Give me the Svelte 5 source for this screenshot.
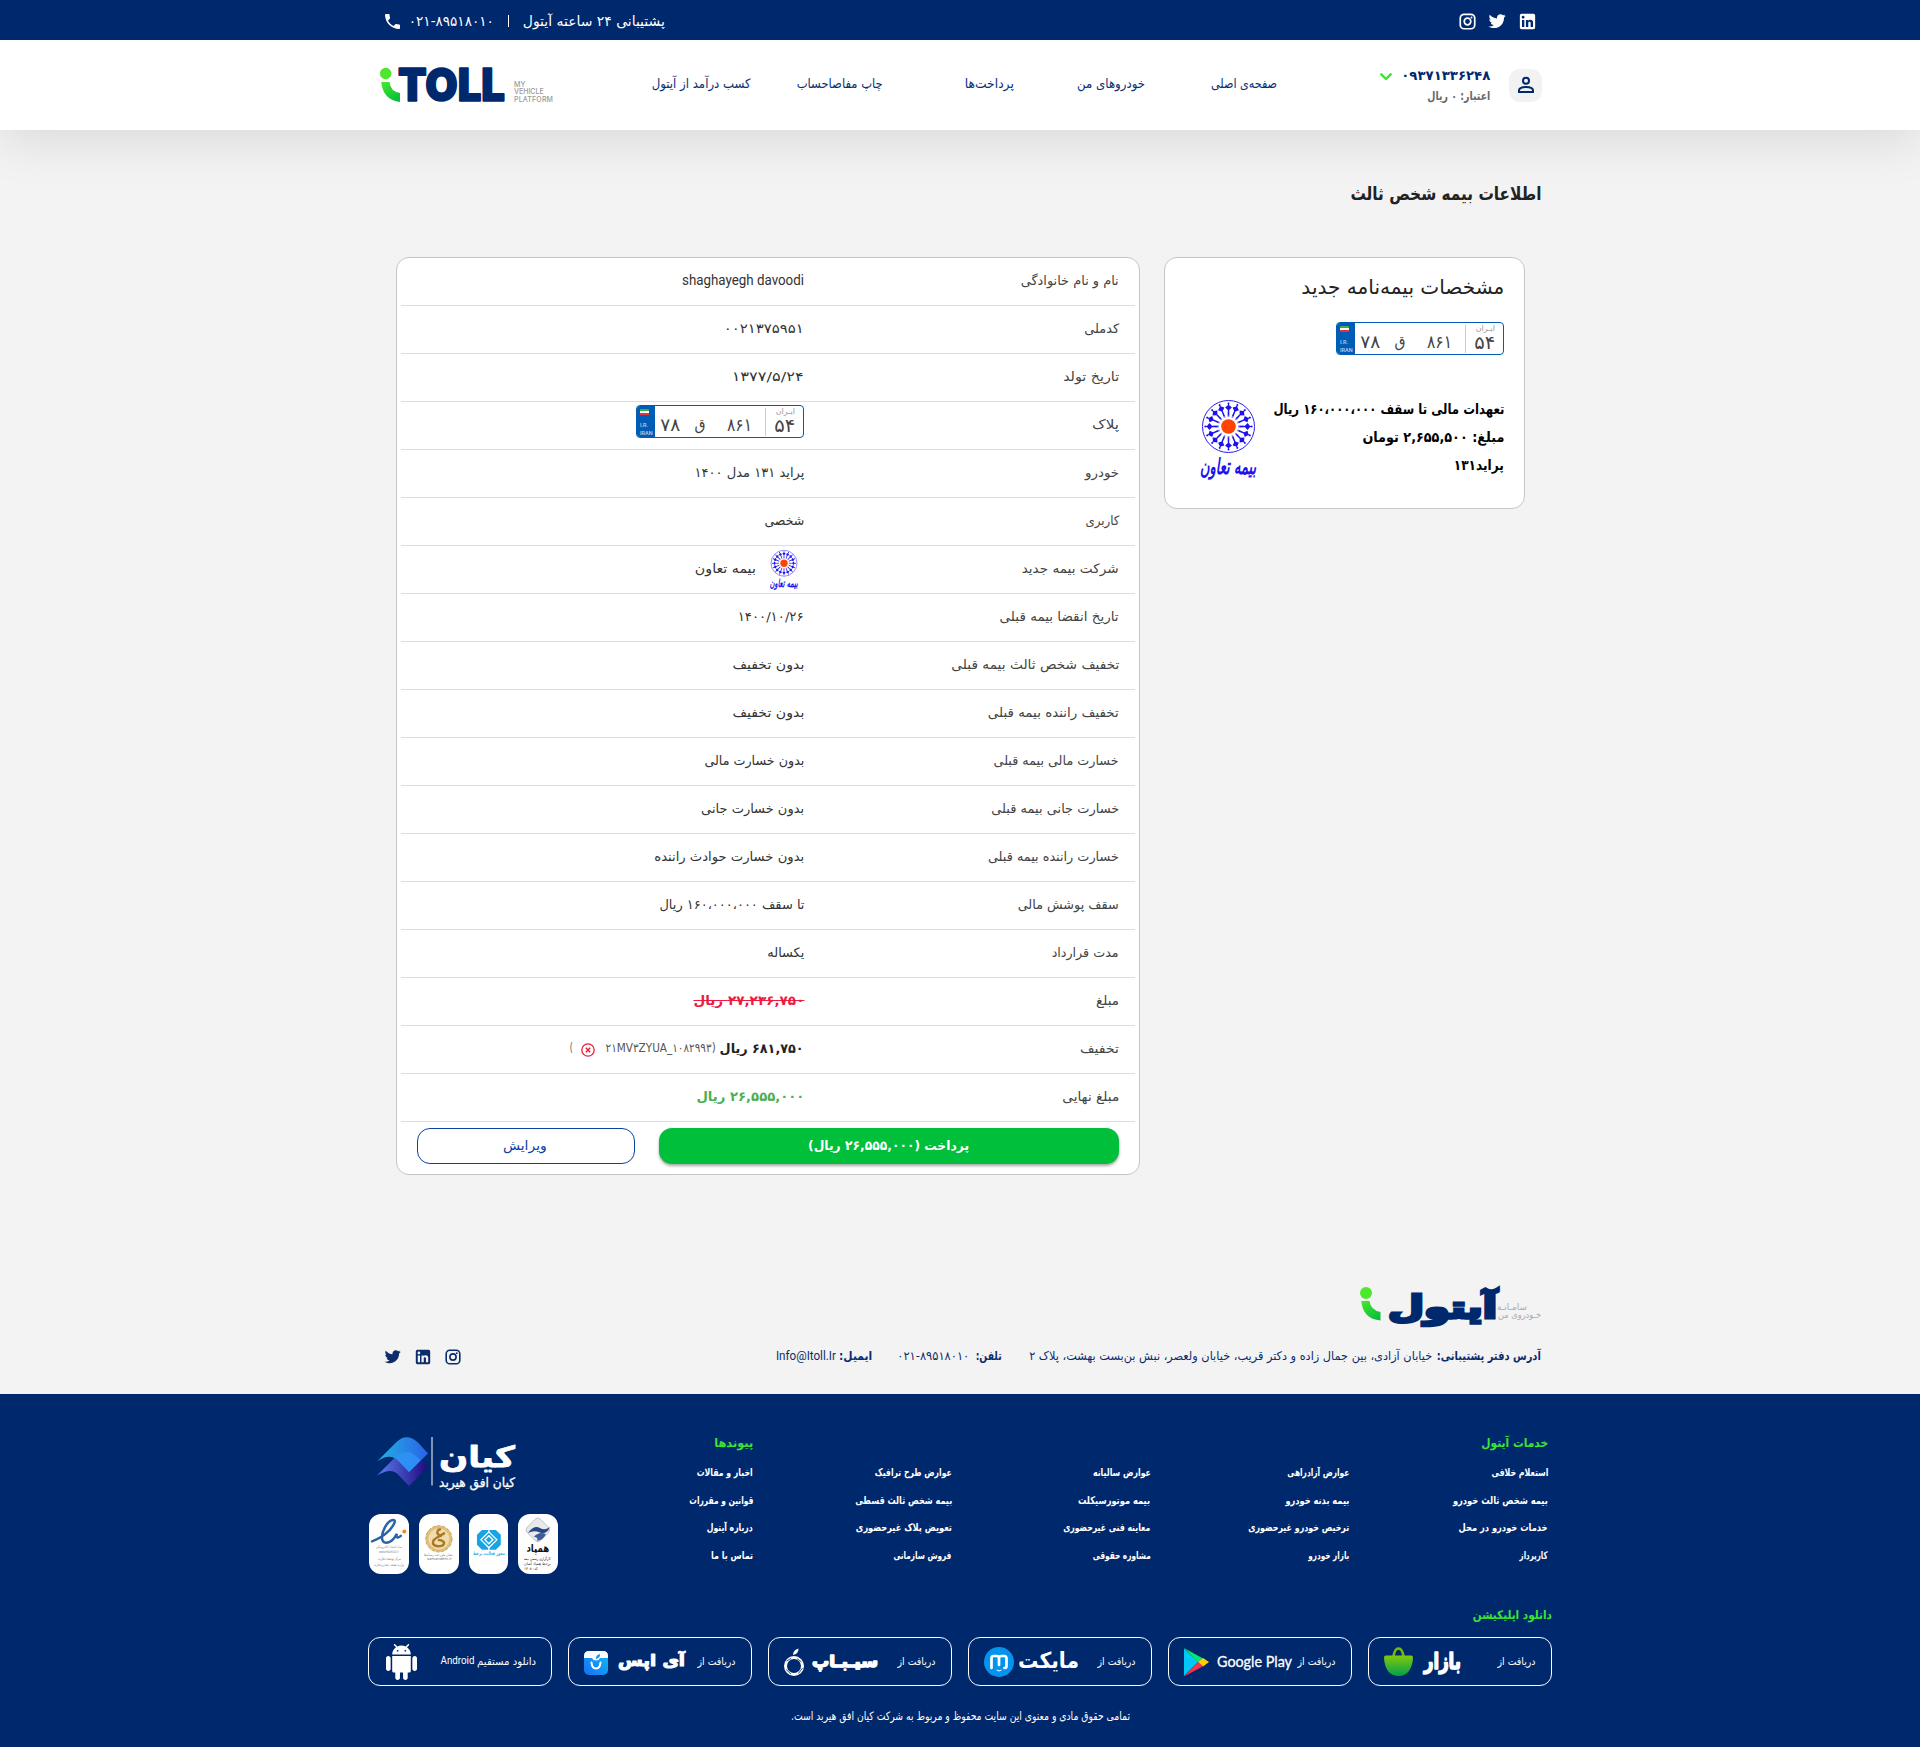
<script>
  const nav = [
    ['صفحه‌ی اصلی', 66],
    ['خودروهای من', 68],
    ['پرداخت‌ها', 49],
    ['چاپ مفاصاحساب', 86],
    ['کسب درآمد از آیتول', 99],
  ];

  const rows = [
    { label: 'نام و نام خانوادگی', lw: 98, value: 'shaghayegh davoodi', vw: 122, cls: 'latin' },
    { label: 'کدملی', lw: 35, value: '۰۰۲۱۳۷۵۹۵۱', vw: 80 },
    { label: 'تاریخ تولد', lw: 56, value: '۱۳۷۷/۵/۲۴', vw: 72 },
    { label: 'پلاک', lw: 27, kind: 'plate' },
    { label: 'خودرو', lw: 34, value: 'پراید ۱۳۱ مدل ۱۴۰۰', vw: 110 },
    { label: 'کاربری', lw: 34, value: 'شخصی', vw: 40 },
    { label: 'شرکت بیمه جدید', lw: 97, kind: 'company', value: 'بیمه تعاون', vw: 61 },
    { label: 'تاریخ انقضا بیمه قبلی', lw: 119, value: '۱۴۰۰/۱۰/۲۶', vw: 66 },
    { label: 'تخفیف شخص ثالث بیمه قبلی', lw: 168, value: 'بدون تخفیف', vw: 72 },
    { label: 'تخفیف راننده بیمه قبلی', lw: 131, value: 'بدون تخفیف', vw: 72 },
    { label: 'خسارت مالی بیمه قبلی', lw: 125, value: 'بدون خسارت مالی', vw: 100 },
    { label: 'خسارت جانی بیمه قبلی', lw: 128, value: 'بدون خسارت جانی', vw: 103 },
    { label: 'خسارت راننده بیمه قبلی', lw: 131, value: 'بدون خسارت حوادث راننده', vw: 150 },
    { label: 'سقف پوشش مالی', lw: 101, value: 'تا سقف ۱۶۰،۰۰۰،۰۰۰ ریال', vw: 145 },
    { label: 'مدت قرارداد', lw: 67, value: 'یکساله', vw: 37 },
    { label: 'مبلغ', lw: 23, value: '۲۷,۲۳۶,۷۵۰ ریال', vw: 111, cls: 'old' },
    { label: 'تخفیف', lw: 39, kind: 'discount', value: '۶۸۱,۷۵۰ ریال', vw: 84 },
    { label: 'مبلغ نهایی', lw: 57, value: '۲۶,۵۵۵,۰۰۰ ریال', vw: 108, cls: 'final' },
  ];

  const columns = [
    { title: 'خدمات آیتول', tw: 67, links: [['استعلام خلافی', 57], ['بیمه شخص ثالث خودرو', 95], ['خدمات خودرو در محل', 89], ['کارپرداز', 28]] },
    { links: [['عوارض آزادراهی', 62], ['بیمه بدنه خودرو', 64], ['ترخیص خودرو غیرحضوری', 101], ['بازار خودرو', 41]] },
    { links: [['عوارض سالیانه', 58], ['بیمه موتورسیکلت', 72], ['معاینه فنی غیرحضوری', 87], ['مشاوره حقوقی', 58]] },
    { links: [['عوارض طرح ترافیک', 77], ['بیمه شخص ثالث قسطی', 97], ['تعویض پلاک غیرحضوری', 96], ['فروش سازمانی', 58]] },
    { title: 'پیوندها', tw: 39, links: [['اخبار و مقالات', 56], ['قوانین و مقررات', 64], ['درباره آیتول', 46], ['تماس با ما', 42]] },
  ];

  const stores = ['bazaar', 'google', 'myket', 'sibapp', 'iapps', 'android'];
  const rays = Array.from({ length: 16 }, (_, i) => i * 22.5);

  // Condenses a line of text horizontally to the width of its box.
  function squeeze(el) {
    const natural = el.getBoundingClientRect().width;
    const wanted = el.parentElement.getBoundingClientRect().width;
    if (natural) el.style.transform = `scaleX(${wanted / natural})`;
  }
</script>

{#snippet t(text, width, cls = '')}
  <span class="fit {cls}" style="width:{width}px"><span class="run" use:squeeze>{text}</span></span>
{/snippet}

{#snippet linkedin()}
  <svg class="social" viewBox="2 2 20 20"><path fill="currentColor" d="M19 3a2 2 0 0 1 2 2v14a2 2 0 0 1-2 2H5a2 2 0 0 1-2-2V5a2 2 0 0 1 2-2h14m-.5 15.5v-5.3a3.26 3.26 0 0 0-3.26-3.26c-.85 0-1.84.52-2.32 1.3v-1.11h-2.79v8.37h2.79v-4.93c0-.77.62-1.4 1.39-1.4a1.4 1.4 0 0 1 1.4 1.4v4.93h2.79M6.88 8.56a1.68 1.68 0 0 0 1.68-1.68c0-.93-.75-1.69-1.68-1.69a1.69 1.69 0 0 0-1.69 1.69c0 .93.76 1.68 1.69 1.68m1.39 9.94v-8.37H5.5v8.37h2.77z" /></svg>
{/snippet}
{#snippet twitter()}
  <svg class="social" viewBox="2 2.5 20.8 20.8"><path fill="currentColor" d="M22.46 6c-.77.35-1.6.58-2.46.69.88-.53 1.56-1.37 1.88-2.38-.83.5-1.75.85-2.72 1.05C18.37 4.5 17.26 4 16 4c-2.35 0-4.27 1.92-4.27 4.29 0 .34.04.67.11.98C8.28 9.09 5.11 7.38 3 4.79c-.37.63-.58 1.37-.58 2.15 0 1.49.75 2.81 1.91 3.56-.71 0-1.37-.2-1.95-.5v.03c0 2.08 1.48 3.82 3.44 4.21a4.22 4.22 0 0 1-1.93.07 4.28 4.28 0 0 0 4 2.98 8.521 8.521 0 0 1-5.33 1.84c-.34 0-.68-.02-1.02-.06C3.44 20.29 5.7 21 8.12 21 16 21 20.33 14.46 20.33 8.79c0-.19 0-.37-.01-.56.84-.6 1.56-1.36 2.14-2.23z" /></svg>
{/snippet}
{#snippet instagram()}
  <svg class="social" viewBox="0 0 16 16" fill="none" stroke="currentColor" stroke-width="1.6">
    <rect x="1.2" y="1.2" width="13.6" height="13.6" rx="3.6" /><circle cx="8" cy="8" r="3.1" /><circle cx="11.8" cy="4.2" r="0.9" fill="currentColor" stroke="none" />
  </svg>
{/snippet}

{#snippet plate()}
  <div class="plate">
    <div class="region"><small>ایـران</small>{@render t('۵۴', 21)}</div>
    <div class="serial">{@render t('۸۶۱', 25)}</div>
    <div class="letter">{@render t('ق', 11)}</div>
    <div class="pair">{@render t('۷۸', 20)}</div>
    <div class="country"><i class="flag"></i><b>I.R.</b><b>IRAN</b></div>
  </div>
{/snippet}

{#snippet insurer(cls)}
  <svg class={cls} viewBox="0 0 57 80">
    <circle cx="29.5" cy="26.5" r="26" fill="#fff" stroke="#2a1ef0" stroke-width="1" />
    {#each rays as angle}
      <g transform="rotate({angle} 29.5 26.5)" fill="#1d12ee">
        <path d="M28.6 17L28.8 10L26.1 7.4L28.8 5.2L29.5 2.6L30.2 5.2L32.9 7.4L30.2 10L30.4 17Z" />
        <circle cx="29.5" cy="3.4" r="1" />
      </g>
    {/each}
    <circle cx="29.5" cy="26.5" r="11" fill="#fff" opacity=".5" />
    <circle cx="29.5" cy="26.5" r="7.3" fill="#ff4305" />
    <text class="callig" x="57" y="74" textLength="56" lengthAdjust="spacingAndGlyphs">بیمه تعاون</text>
  </svg>
{/snippet}

{#snippet storeLogo(name)}
  {#if name === 'bazaar'}
    <svg width="77" height="36" viewBox="0 0 77 36">
      <defs><linearGradient id="bag" x1="0" y1="0" x2="0" y2="1"><stop offset="0" stop-color="#83c80d" /><stop offset="1" stop-color="#00a04c" /></linearGradient></defs>
      <path d="M9.5 13Q10.5 4.5 14.5 4.5T19.500 13" fill="none" stroke="#78b80d" stroke-width="2.6" />
      <path d="M1.800 11.500H27.200Q29.200 11.500 29 14C28.200 25 23.500 32 14.500 32S.800 25 0 14Q-.2 11.500 1.800 11.500Z" fill="url(#bag)" />
      <text class="mark" x="77" y="25" font-size="22" stroke-width="1.600" textLength="37" lengthAdjust="spacingAndGlyphs">بازار</text>
    </svg>
  {:else if name === 'google'}
    <svg width="109" height="36" viewBox="0 0 109 36">
      <path d="M0 4.500L14 18L0 32Z" fill="#00c8f8" /><path d="M0 4L19 14.500L14 18.500Z" fill="#00e776" />
      <path d="M19 14L25 18L19 22.500L14 18.200Z" fill="#ffce00" /><path d="M0 32.500L19 22.200L14 18Z" fill="#f93448" />
      <text class="google" x="33" y="23" font-size="16" textLength="75" lengthAdjust="spacingAndGlyphs">Google Play</text>
    </svg>
  {:else if name === 'myket'}
    <svg width="95" height="36" viewBox="0 0 95 36">
      <circle cx="15" cy="18" r="15" fill="#0494ee" />
      <path d="M7.500 24V14.500Q7.500 12 9.500 12H12.500Q15 12 15 14.500V21M15 14.500Q15 12 17.500 12H20Q22.500 12 22.500 14.500V22Q22.500 24 20.500 24" fill="none" stroke="#fff" stroke-width="2.700" stroke-linecap="round" />
      <path d="M12.500 26Q15 28 17.500 26" fill="none" stroke="#fff" />
      <text class="mark" x="95" y="24" font-size="22" stroke-width="0" textLength="61" lengthAdjust="spacingAndGlyphs">مایکت</text>
    </svg>
  {:else if name === 'sibapp'}
    <svg width="94" height="36" viewBox="0 0 94 36">
      <circle cx="10" cy="22" r="8.500" fill="none" stroke="#fff" stroke-width="3" />
      <path d="M2.500 17L7 14.500M13 14.500L17.500 18M18.500 24L14.500 29.500M7 30L2 25.500" stroke="#00286c" stroke-width=".8" />
      <path d="M9 11Q9 6 14.500 4.500Q14.500 10 9 11Z" fill="#fff" />
      <text class="mark" x="94" y="23" font-size="16" stroke-width="1.500" textLength="66" lengthAdjust="spacingAndGlyphs">سیـبـاپ</text>
    </svg>
  {:else if name === 'iapps'}
    <svg width="101" height="36" viewBox="0 0 101 36">
      <defs><linearGradient id="sky" x1="0" y1="1" x2="1" y2="0"><stop offset="0" stop-color="#176ff4" /><stop offset="1" stop-color="#11bdf4" /></linearGradient></defs>
      <rect y="7" width="24" height="24" rx="5" fill="url(#sky)" />
      <path d="M0 14V12Q0 7 5 7H19Q24 7 24 12V14H16Q15 16.500 12 16.500T8 14Z" fill="#fff" />
      <path d="M12 15Q11.500 11 16 10Q16.500 14 12 15Z" fill="#1598ee" />
      <path d="M7.500 18.500Q8 24.500 12 24.500T16.500 18.500" fill="none" stroke="#fff" stroke-width="2" stroke-linecap="round" />
      <text class="mark" x="101" y="22" font-size="16" stroke-width="1.100" textLength="67" lengthAdjust="spacingAndGlyphs">آی اپس</text>
    </svg>
  {:else}
    <svg class="droid" width="31" height="36" viewBox="2 0 20 24" preserveAspectRatio="none"><path fill="#fff" d="M6 18c0 .55.45 1 1 1h1v3.500c0 .83.67 1.500 1.500 1.500s1.500-.67 1.500-1.500V19h2v3.500c0 .83.67 1.500 1.500 1.500s1.500-.67 1.500-1.500V19h1c.55 0 1-.45 1-1V8H6v10zM3.500 8C2.670 8 2 8.670 2 9.500v7c0 .83.67 1.500 1.500 1.500S5 17.330 5 16.500v-7C5 8.670 4.330 8 3.500 8zm17 0c-.83 0-1.500.67-1.500 1.500v7c0 .83.67 1.500 1.500 1.500s1.500-.67 1.500-1.500v-7c0-.83-.67-1.500-1.500-1.500zm-4.970-5.840l1.300-1.300c.2-.2.2-.51 0-.71-.2-.2-.51-.2-.71 0l-1.480 1.480C13.850 1.230 12.950 1 12 1c-.96 0-1.860.23-2.660.63L7.850.15c-.2-.2-.51-.2-.71 0-.2.2-.2.51 0 .71l1.310 1.310C6.970 3.260 6 5.010 6 7h12c0-1.990-.97-3.750-2.470-4.840zM10 5H9V4h1v1zm5 0h-1V4h1v1z" /></svg>
  {/if}
{/snippet}

<div class="page" dir="rtl">
  <div class="topbar">
    <div class="wrap">
      <div class="icons">{@render linkedin()}{@render twitter()}{@render instagram()}</div>
      <div class="support">
        {@render t('پشتیبانی ۲۴ ساعته آیتول', 142)}
        <i class="bar"></i>
        {@render t('۰۲۱-۸۹۵۱۸۰۱۰', 85)}
        <svg class="phone" viewBox="3 3 18 18"><path fill="currentColor" d="M6.620 10.790c1.440 2.830 3.760 5.140 6.590 6.590l2.200-2.200c.27-.27.67-.36 1.020-.24 1.120.37 2.330.57 3.570.57.55 0 1 .45 1 1V20c0 .55-.45 1-1 1-9.390 0-17-7.610-17-17 0-.55.45-1 1-1h3.500c.55 0 1 .45 1 1 0 1.250.2 2.450.57 3.570.11.35.03.74-.25 1.020l-2.200 2.200z" /></svg>
      </div>
    </div>
  </div>

  <header>
    <div class="wrap">
      <div class="avatar">
        <svg viewBox="0 0 18 18" fill="none" stroke="#00286c" stroke-width="2"><circle cx="9" cy="4.800" r="3" /><path d="M2 16V14.500Q2 11 9 11T16 14.500V16Z" /></svg>
      </div>
      <div class="user">
        <div class="mobile">
          {@render t('۰۹۳۷۱۳۳۶۲۴۸', 89)}
          <svg class="chevron" viewBox="0 0 12 8"><path d="M1.300 1.300L6 6L10.700 1.300" fill="none" stroke="#3fe22c" stroke-width="2.400" stroke-linecap="round" stroke-linejoin="round" /></svg>
        </div>
        <div class="credit">{@render t('اعتبار: ۰ ریال', 63)}</div>
      </div>
      <nav>
        {#each nav as [text, width]}<a href="#top">{@render t(text, width)}</a>{/each}
      </nav>
      <svg class="brand" width="174" height="36" viewBox="0 0 174 36">
        <defs><linearGradient id="leaf" x1="0" y1="0" x2=".6" y2="1"><stop offset="0" stop-color="#4be82c" /><stop offset="1" stop-color="#0abf3a" /></linearGradient></defs>
        <circle cx="5.700" cy="6.500" r="5.700" fill="#4be82c" />
        <path d="M1.200 15H9.500Q10.500 24.500 20 26V35Q3 33 1.200 15Z" fill="url(#leaf)" />
        <text class="toll" x="18" y="34" textLength="107" lengthAdjust="spacingAndGlyphs">TOLL</text>
        <g class="tag"><text x="134" y="20">MY</text><text x="134" y="27.300">VEHICLE</text><text x="134" y="34.600" textLength="39">PLATFORM</text></g>
      </svg>
    </div>
  </header>

  <main>
    <h1>{@render t('اطلاعات بیمه شخص ثالث', 191)}</h1>
    <div class="cards">
      <section class="summary">
        <h2>{@render t('مشخصات بیمه‌نامه جدید', 203)}</h2>
        {@render plate()}
        <div class="cover">
          <div class="facts">
            <p>{@render t('تعهدات مالی تا سقف ۱۶۰،۰۰۰،۰۰۰ ریال', 231)}</p>
            <p>{@render t('مبلغ: ۲,۶۵۵,۵۰۰ تومان', 142)}</p>
            <p>{@render t('پراید۱۳۱', 50)}</p>
          </div>
          {@render insurer('insurer-large')}
        </div>
      </section>

      <section class="details">
        {#each rows as row}
          <div class="row">
            <div class="label">{@render t(row.label, row.lw)}</div>
            <div class="value">
              {#if row.kind === 'plate'}
                {@render plate()}
              {:else if row.kind === 'company'}
                {@render insurer('insurer-small')}
                {@render t(row.value, row.vw)}
              {:else if row.kind === 'discount'}
                {@render t(row.value, row.vw, 'strong')}
                <span class="code">
                  {@render t('(', 4)}
                  {@render t('۲۱MV۳ZYUA_۱۰۸۲۹۹۳', 106, 'ltr')}
                  <svg class="remove" viewBox="0 0 14 14" fill="none" stroke="#ee1a3f"><circle cx="7" cy="7" r="6.200" stroke-width="1.300" /><path d="M4.800 4.800L9.200 9.200M9.200 4.800L4.800 9.200" stroke-width="1.500" /></svg>
                  {@render t(')', 3)}
                </span>
              {:else}
                {@render t(row.value, row.vw, row.cls)}
              {/if}
            </div>
          </div>
        {/each}
        <div class="actions">
          <button class="pay">{@render t('پرداخت (۲۶,۵۵۵,۰۰۰ ریال)', 161)}</button>
          <button class="edit">{@render t('ویرایش', 44)}</button>
        </div>
      </section>
    </div>
  </main>

  <div class="contact">
    <svg class="brand-fa" width="181" height="44" viewBox="0 0 181 44">
      <circle cx="6" cy="6" r="6" fill="#4be82c" />
      <path d="M1.200 14H9.500Q10.500 23 20.500 25V33.500Q3 32 1.200 14Z" fill="url(#leaf)" />
      <text class="itoll" x="137" y="31" textLength="109" lengthAdjust="spacingAndGlyphs">آیتول</text>
      <g class="tag-fa"><text x="167" y="23" textLength="30" lengthAdjust="spacingAndGlyphs">سامـانـه</text><text x="181" y="31" textLength="43" lengthAdjust="spacingAndGlyphs">خـودروی من</text></g>
    </svg>
    <div class="line">
      {@render t('آدرس دفتر پشتیبانی:', 104, 'strong')}
      {@render t('خیابان آزادی، بین جمال زاده و دکتر قریب، خیابان ولعصر، نبش بن‌بست بهشت، پلاک ۲', 403, 'address')}
      {@render t('تلفن:', 26, 'strong tel')}
      {@render t('۰۲۱-۸۹۵۱۸۰۱۰', 72, 'number')}
      {@render t('ایمیل:', 33, 'strong mail')}
      {@render t('Info@Itoll.Ir', 60, 'latin')}
      <div class="icons">{@render instagram()}{@render linkedin()}{@render twitter()}</div>
    </div>
  </div>

  <footer>
    <div class="foot">
      <div class="top">
        <div class="columns">
          {#each columns as col}
            <div class="col">
              <h3>{#if col.title}{@render t(col.title, col.tw)}{/if}</h3>
              {#each col.links as [text, width]}<a href="#top">{@render t(text, width)}</a>{/each}
            </div>
          {/each}
        </div>
        <div class="trust">
          <svg class="kian" width="142" height="56" viewBox="0 0 142 56">
            <defs>
              <linearGradient id="ka" x1="0" x2="1"><stop offset="0" stop-color="#22b2e0" /><stop offset="1" stop-color="#2b62e8" /></linearGradient>
              <linearGradient id="kb" x1="0" x2="1"><stop offset="0" stop-color="#5b7df0" /><stop offset="1" stop-color="#20087c" /></linearGradient>
            </defs>
            <path d="M0 38.500L20 18.500Q31 9.500 41 19.500L51 30L32 49L22 38.500Q15 29.500 0 38.500Z" fill="url(#kb)" />
            <path d="M0 24.500L20 4.500Q30-4.500 41 5.500L51 16.500L32 35L22 24.500Q13 15 0 24.500Z" fill="url(#ka)" />
            <path d="M17.500 20.800Q31 8 43.500 23.500L32 35L22 24.500Q20 22 17.500 20.800Z" fill="#2f93f8" opacity=".8" />
            <path d="M55 0V48.500" stroke="#fff" />
            <text class="mark" x="138" y="30" font-size="29" stroke-width=".8" textLength="76" lengthAdjust="spacingAndGlyphs">کیان</text>
            <text class="mark light" x="138" y="50" font-size="13" stroke-width=".3" textLength="76" lengthAdjust="spacingAndGlyphs">کیان افق هیربد</text>
          </svg>
          <div class="badges">
            <div class="badge">
              <svg viewBox="0 0 40 60">
                <rect x="10.500" y="6.500" width="19" height="19" rx="4" transform="rotate(45 20 16)" fill="#e8e9eb" stroke="#b5b8bd" stroke-width=".8" />
                <path d="M10 19Q16 11 22 14Q27 17 32 13Q29 21 22 18.500Q16 16 10 19Z" fill="#284584" /><path d="M16 23Q22 17 28 20.500Q25 27 19 27Q21 23.500 16 23Z" fill="#3c5b98" />
                <text x="31.500" y="38" font-size="11" font-weight="700" fill="#111" textLength="23" lengthAdjust="spacingAndGlyphs">همپاد</text>
                <g fill="#222" font-size="4"><text x="33" y="46" textLength="27" lengthAdjust="spacingAndGlyphs">کارگزاری رسمی بیمه</text><text x="33" y="51" textLength="27" lengthAdjust="spacingAndGlyphs">برخط همپاد آسان</text><text x="20" y="56.500" textLength="14" lengthAdjust="spacingAndGlyphs">کد: ۱۴۰۸</text></g>
              </svg>
            </div>
            <div class="badge">
              <svg viewBox="0 0 40 60">
                <path d="M13 16H27L32 21V31L27 36H13L8 31V21Z" fill="#18a4e2" /><path d="M20 18L28 26L20 34L12 26Z" fill="none" stroke="#fff" stroke-width="1.300" /><path d="M20 21L25 26L20 31L15 26Z" fill="#fff" /><path d="M20 23L23 26L20 29L17 26Z" fill="#18a4e2" /><path d="M20 15V18M20 34V37" stroke="#fff" stroke-width="1.200" />
                <text x="36" y="41.500" font-size="5" font-weight="700" fill="#35afe5" textLength="32" lengthAdjust="spacingAndGlyphs">مجوز فعالیت برخط</text>
              </svg>
            </div>
            <div class="badge">
              <svg viewBox="0 0 40 60">
                <circle cx="20" cy="25" r="13.200" fill="#dfbf7d" stroke="#c9a35a" stroke-dasharray="3.500 1.500" /><circle cx="20" cy="25" r="10.500" fill="#f0dcae" />
                <path d="M22 15L19 16.500Q17 21 22 21.500L26 19M23 21.500Q13 25 14 30Q17 34 24 31.500Q28 27 19 26" fill="none" stroke="#a97824" stroke-width="2.400" />
                <g fill="#777" font-size="3.600"><text x="34" y="42" textLength="29" lengthAdjust="spacingAndGlyphs">نشان ملی ثبت رسانه‌ها</text><text class="en" x="8" y="46.500" textLength="25" lengthAdjust="spacingAndGlyphs">samandehi.ir</text></g>
              </svg>
            </div>
            <div class="badge">
              <svg viewBox="0 0 40 60">
                <path d="M3 27.500Q13 24 21 16Q29 6 24 6Q18 7 14 18Q11 29 18 29Q24 28 28 20Q27 26 32 22" fill="none" stroke="#2965a8" stroke-width="2.500" stroke-linecap="round" /><circle cx="35.500" cy="17.500" r="2" fill="#f28a1c" />
                <g fill="#888" font-size="3.600"><text x="33" y="34.500" textLength="26" lengthAdjust="spacingAndGlyphs">نماد اعتماد الکترونیکی</text><text class="en" x="10" y="39.500" textLength="20" lengthAdjust="spacingAndGlyphs">www.eNAMAD.ir</text><text x="32" y="46.500" font-size="4.500" textLength="23" lengthAdjust="spacingAndGlyphs">مرکز توسعه تجارت</text><text x="35" y="52.500" font-size="4.500" textLength="30" lengthAdjust="spacingAndGlyphs">وزارت صنعت، معدن و تجارت</text></g>
              </svg>
            </div>
          </div>
        </div>
      </div>
      <h3 class="apps">{@render t('دانلود اپلیکیشن', 79)}</h3>
      <div class="stores">
        {#each stores as name}
          <a class="store" href="#top">
            {#if name === 'android'}<span class="direct">{@render t('دانلود مستقیم', 59)}{@render t('Android', 34, 'latin')}</span>{:else}{@render t('دریافت از', 38, 'get')}{/if}
            {@render storeLogo(name)}
          </a>
        {/each}
      </div>
      <p class="copyright">{@render t('تمامی حقوق مادی و معنوی این سایت محفوظ و مربوط به شرکت کیان افق هیربد است.', 339)}</p>
    </div>
  </footer>
</div>

<style>
  :global(body) { margin: 0; background: #f3f3f3; }
  .page { min-height: 1747px; font-family: 'DejaVu Sans', sans-serif; font-size: 13px; color: #333; display: flex; flex-direction: column; }
  svg { display: block; flex: none; overflow: visible; }
  svg text { direction: rtl; }
  a { color: inherit; text-decoration: none; }
  h1, h2, h3, p { margin: 0; font-weight: inherit; font-size: inherit; }
  .fit { display: inline-block; flex: none; white-space: nowrap; direction: rtl; }
  .run { display: inline-block; transform-origin: 100% 50%; }
  .ltr .run { direction: ltr; }
  .latin { font-family: Roboto, sans-serif; }
  .strong { font-weight: 700; }
  .wrap { width: 1164px; margin: 0 auto; display: flex; align-items: center; }
  .icons { display: flex; align-items: center; gap: 14px; }
  .social { width: 16px; height: 16px; }

  .topbar { background: #00286c; color: #fff; height: 40px; position: relative; z-index: 2; }
  .topbar .wrap { height: 42px; justify-content: space-between; box-sizing: border-box; padding: 0 6px 0 7px; }
  .topbar .social { width: 17px; height: 17px; }
  .topbar .icons { gap: 13px; }
  .support { display: flex; align-items: center; font-size: 14px; }
  .bar { width: 1px; height: 12px; background: #fff; margin: 0 14px; }
  .phone { width: 15px; height: 15px; margin-right: 9px; }

  header { height: 90px; background: #fff; box-shadow: 0 12px 50px rgba(0, 0, 0, .1); position: relative; }
  header .wrap { height: 90px; }
  .avatar { width: 33px; height: 33px; border-radius: 11px; background: #f2f2f2; display: grid; place-items: center; }
  .avatar svg { width: 18px; height: 18px; }
  .user { width: 111px; margin-right: 19px; display: flex; flex-direction: column; gap: 4px; font-weight: 700; font-size: 13px; line-height: 16px; color: #00286c; padding-top: 1px; }
  .mobile { display: flex; align-items: center; gap: 9px; }
  .chevron { width: 12px; height: 8px; margin-top: 2px; }
  .credit { color: #696969; font-size: 12px; }
  nav { margin-right: 102px; padding-bottom: 4px; display: grid; grid-template-columns: repeat(4, 131.5px) 100px; color: #0a2f73; font-size: 13px; }
  .brand { direction: ltr; margin-right: auto; margin-left: 2px; }
  .toll { direction: ltr; font: 900 45px Inter, sans-serif; fill: #00286c; stroke: #00286c; stroke-width: 1.6; stroke-linejoin: round; }
  .tag text { direction: ltr; font: 500 7px Inter, sans-serif; fill: #999; }

  main { width: 1164px; margin: 0 auto; height: 1157px; }
  h1 { font-size: 18px; font-weight: 700; line-height: 28px; padding: 50px 1px 49px 0; color: #222; }
  .cards { display: flex; align-items: flex-start; gap: 24px; padding-right: 17px; }
  section { background: #fff; border: 1px solid #c6c6c6; border-radius: 13px; box-sizing: border-box; }
  .summary { width: 361px; height: 252px; padding: 15px 20px; }
  h2 { font-size: 20px; line-height: 28px; margin-bottom: 21px; color: #222; }
  .plate { width: 168px; height: 33px; box-sizing: border-box; border: 1px solid #005db5; border-radius: 4px; display: flex; font-size: 18px; line-height: 20px; color: #444; background: #fff; overflow: hidden; align-items: flex-end; }
  .plate > div { padding-bottom: 2px; box-sizing: border-box; }
  .plate .region { width: 38px; height: 28px; border-left: 1px solid #ccc; padding-right: 8px; padding-bottom: 0; margin-bottom: 1px; display: flex; flex-direction: column; justify-content: flex-end; align-items: flex-start; }
  .region small { font-size: 8px; line-height: 8px; color: #999; }
  .serial { width: 60px; padding-right: 13px; }
  .letter { width: 24px; font-size: 16px; }
  .pair { width: 26px; padding-right: 1px; }
  .plate .country { margin-right: auto; width: 18px; align-self: stretch; background: #005db5; color: #b8d3ec; display: flex; flex-direction: column; direction: ltr; padding: 3px 0 0 3px; font: 5.5px/8px Roboto, sans-serif; }
  .country b { font-weight: 500; }
  .flag { width: 9px; height: 6px; margin-bottom: 6px; background: linear-gradient(#3fae49 33%, #fff 33% 66%, #e2333d 66%); flex: none; }
  .cover { display: flex; justify-content: space-between; margin-top: 39px; }
  .facts { font-weight: 700; font-size: 14px; color: #000; line-height: 28px; padding-top: 1px; }
  .insurer-large { width: 57px; height: 80px; margin: 6px 0 0 14px; }
  .insurer-small { width: 29px; height: 40px; margin: 3px 6px 0 13px; }
  .callig { font: italic 700 22px 'DejaVu Sans', sans-serif; fill: #1d12ee; }

  .details { width: 744px; height: 918px; padding: 0 4px; overflow: hidden; }
  .row { height: 48px; box-sizing: border-box; border-bottom: 1px solid #ddd; display: flex; align-items: center; padding: 0 16px 3px; }
  .label { width: 315px; color: #444; }
  .value { display: flex; align-items: center; height: 44px; }
  .value .plate { margin-bottom: 5px; }
  .old, .final { font-weight: 700; }
  .old { color: #ee1a3f; }
  .old .run { text-decoration: line-through; }
  .final { color: #4caf50; }
  .value > .strong { color: #222; }
  .value > .latin { font-size: 14px; }
  .code { display: flex; align-items: center; margin-right: 4px; font-size: 12px; color: #555; }
  .remove { width: 14px; height: 14px; margin: 4px 11px 0 8px; }
  .actions { display: flex; gap: 24px; padding: 6px 16px 0; }
  button { height: 36px; border-radius: 13px; font: inherit; padding: 0 0 2px; box-sizing: border-box; }
  .pay { width: 460px; border: 0; background: #00bf3a; color: #fff; font-weight: 700; box-shadow: 0 2px 3px rgba(0, 0, 0, .35); }
  .edit { width: 218px; border: 1px solid #0b41a5; background: #fff; color: #0b41a5; }

  .contact { width: 1164px; margin: 0 auto; height: 107px; padding-right: 1px; box-sizing: border-box; }
  .brand-fa { direction: ltr; margin-bottom: 15px; }
  .itoll { font: 700 31px 'DejaVu Sans', sans-serif; fill: #00286c; stroke: #00286c; stroke-width: 3; }
  .tag-fa text { font-size: 9px; fill: #aaa; }
  .line { display: flex; align-items: center; font-size: 12px; line-height: 20px; color: #0d2c6c; }
  .line .address { margin-right: 5px; }
  .line .tel { margin-right: 27px; }
  .line .number { margin-right: 7px; }
  .line .mail { margin-right: 25px; }
  .line .latin { margin-right: 3px; }
  .line .icons { margin-right: auto; margin-left: 7px; padding-top: 2px; }

  footer { background: #00286c; color: #fff; flex: 1; font-size: 10.5px; }
  .foot { width: 1184px; margin: 0 auto; }
  .top { display: flex; justify-content: space-between; height: 204px; padding-top: 35px; box-sizing: border-box; }
  .columns { display: grid; grid-template-columns: repeat(4, 198.75px) 70px; padding-right: 4px; font-weight: 700; }
  .col { display: flex; flex-direction: column; }
  h3 { height: 30px; line-height: 28px; font-size: 12px; font-weight: 700; color: #3be335; }
  .col a { height: 27.6px; line-height: 27.6px; }
  .trust { width: 190px; direction: ltr; padding-top: 8px; }
  .kian { margin-left: 9px; }
  .badges { display: flex; flex-direction: row-reverse; justify-content: flex-end; gap: 10px; padding: 21px 0 0 1px; }
  .badge { width: 40px; height: 60px; background: #fff; border-radius: 12px; }
  .badge .en { direction: ltr; }
  .apps { height: 39px; line-height: 34px; }
  .stores { display: flex; gap: 16px; }
  .store { width: 184px; height: 49px; box-sizing: border-box; border: 1px solid #fff; border-radius: 12px; display: flex; justify-content: space-between; align-items: center; padding: 0 15px; direction: rtl; }
  .store svg { direction: ltr; }
  .get, .direct { padding-bottom: 2px; }
  .store .droid { margin-left: 2px; }
  .direct { display: flex; gap: 3px; align-items: center; }
  .mark { font-family: 'DejaVu Sans', sans-serif; font-weight: 700; fill: #fff; stroke: #fff; stroke-linejoin: round; }
  .light { font-weight: 400; }
  .google { direction: ltr; font-family: Lato, sans-serif; font-weight: 400; fill: #fff; stroke: #fff; stroke-width: .3; }
  .copyright { text-align: center; margin-top: 20px; font-size: 11.5px; line-height: 20px; }
</style>
